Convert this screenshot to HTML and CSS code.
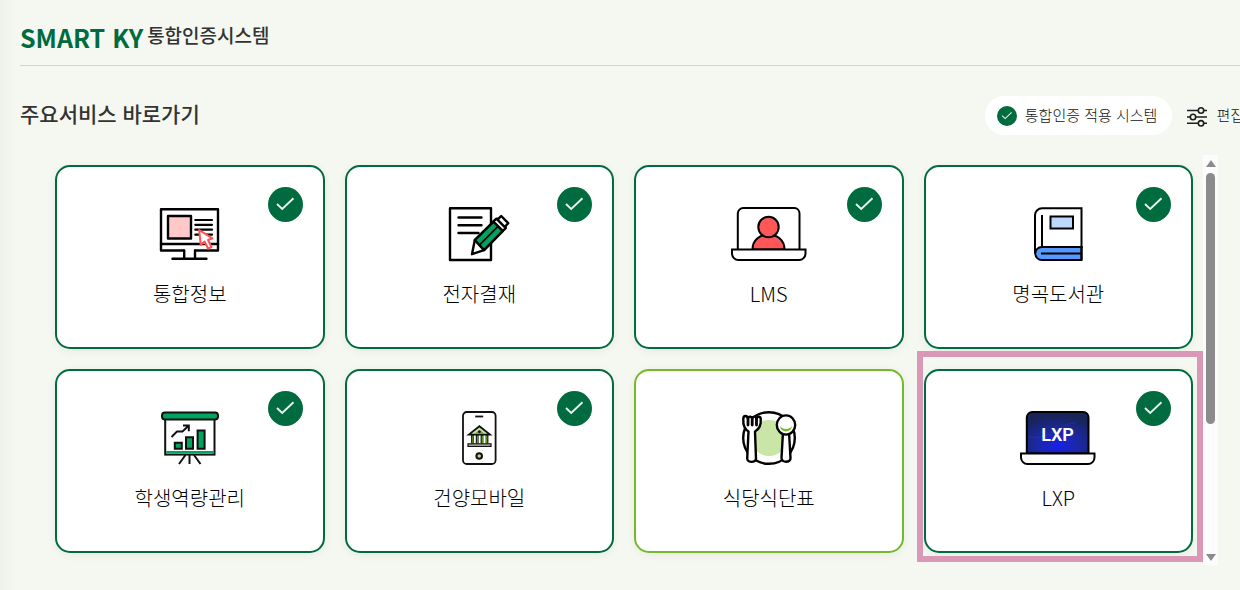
FILE: index.html
```html
<!DOCTYPE html>
<html lang="ko">
<head>
<meta charset="utf-8">
<meta name="viewport" content="width=device-width, initial-scale=1">
<title>SMART KY 통합인증시스템</title>
<link rel="stylesheet" href="styles.css">
</head>
<body>
<svg class="defs" aria-hidden="true">
  <symbol id="check" viewBox="0 0 35 35">
    <circle cx="17.5" cy="17.5" r="17.5" fill="#006b3f"/>
    <path d="M9 17l5.2 5L25.500 11.300" fill="none" stroke="#e9f3ee" stroke-width="1.900"/>
  </symbol>
</svg>
<header class="header">
  <h1 class="brand"><span class="brand-name">SMART KY</span><span class="brand-sub">통합인증시스템</span></h1>
</header>
<main class="main">
  <div class="section-head">
    <h2 class="section-title">주요서비스 바로가기</h2>
    <div class="tools">
      <p class="legend"><svg class="legend-icon" aria-hidden="true"><use href="#check"/></svg><span class="legend-text">통합인증 적용 시스템</span></p>
      <button class="edit" type="button">
        <svg class="edit-icon" viewBox="0 0 22 22" fill="none" stroke="#1d1d1d" stroke-width="1.6" aria-hidden="true"><path d="M1 5.500h11M18 5.500h3M1 12h3M10 12h11M1 18.300h11M18 18.300h3"/><circle cx="15" cy="5.500" r="2.700"/><circle cx="7" cy="12" r="2.700"/><circle cx="15" cy="18.300" r="2.700"/></svg><span class="legend-text">편집</span>
      </button>
    </div>
  </div>
  <div class="services">
    <ul class="grid">
      <li class="item"><a class="card" href="#">
        <svg class="icon" viewBox="0 0 80 56" fill="none" stroke="#000" stroke-width="2.4" stroke-linejoin="round" stroke-linecap="round" aria-hidden="true"><rect x="11" y="3.3" width="57" height="41.2"/><path d="M11 38h57"/><path d="M34.5 43h10V52h-10z" fill="#fff" stroke="none"/><path d="M34.2 44.5v8M45 44.5v8M22.5 52.7h34"/><rect x="18" y="10" width="23" height="22.5" fill="#ffc9c9"/><path d="M45.3 14H62M45.3 18.800H62M45.3 23.700H62M45.3 28.700H62" stroke-width="2.200"/><path d="M49.2 24l1.5 14.8 4-3.2 3.400 7.100 3.400-1.700-3.400-7 4.300-1.700z" fill="#fff" stroke="#ff5252" stroke-width="2"/></svg>
        <span class="label">통합정보</span>
        <svg class="badge" role="img" aria-label="통합인증"><use href="#check"/></svg></a></li>
      <li class="item"><a class="card" href="#">
        <svg class="icon" viewBox="0 0 80 56" fill="none" stroke="#000" stroke-width="2.400" stroke-linejoin="round" stroke-linecap="round" aria-hidden="true"><rect x="11" y="2.300" width="41" height="51.700"/><path d="M19.500 11.500h23M19.500 19.300h23M19.500 27h20"/><path d="M33 48.200l2.800-14.100 18.800-18.400 9.200 9.200-18.800 19.200z" fill="#fff"/><path d="M35.800 34.100l18.800-18.400 9.200 9.200-18.800 19.200z" fill="#00a35f"/><path d="M40.400 39.200l18.800-19" stroke-width="1.800"/><path d="M54.400 15.500l3-2.800 9.400 9.400-3 2.800zM57.400 12.700h2.200l2.600-2.700 7 7.200-2.600 2.800.2 2.100z" fill="#fff"/></svg>
        <span class="label">전자결재</span>
        <svg class="badge" role="img" aria-label="통합인증"><use href="#check"/></svg></a></li>
      <li class="item"><a class="card" href="#">
        <svg class="icon" viewBox="0 0 80 56" fill="#fff" stroke="#000" stroke-width="2" aria-hidden="true"><path d="M8.800 43.500V7.500a5.500 5.500 0 0 1 5.500-5.500h51A5.500 5.500 0 0 1 70.500 7.500v36"/><path d="M23.500 43.500c0-20 32-20 32 0z" fill="#ff5757"/><circle cx="39.500" cy="21" r="10.200" fill="#ff5757"/><path d="M3 43.500h73.500v4a6.500 6.500 0 0 1-6.500 6.500H9.500A6.500 6.500 0 0 1 3 47.500z"/></svg>
        <span class="label">LMS</span>
        <svg class="badge" role="img" aria-label="통합인증"><use href="#check"/></svg></a></li>
      <li class="item"><a class="card" href="#">
        <svg class="icon" viewBox="0 0 80 56" fill="none" stroke="#000" stroke-width="2" aria-hidden="true"><path d="M17 47.500V9a7 7 0 0 1 7-6.700h39.500v39H24" fill="#fff"/><path d="M63.500 54H23.800a6.400 6.400 0 0 1 0-13h39.700z" fill="#5599ff"/><path d="M63.500 40v14M24 9v31M23 47.500h40"/><rect x="32.500" y="10.500" width="22.500" height="12" fill="#bdd8ff"/></svg>
        <span class="label">명곡도서관</span>
        <svg class="badge" role="img" aria-label="통합인증"><use href="#check"/></svg></a></li>
      <li class="item"><a class="card" href="#">
        <svg class="icon" viewBox="0 0 80 56" fill="none" stroke="#111" stroke-width="2" aria-hidden="true"><path d="M35.500 45L29 54M39.500 45v9M44 45l6.500 9"/><rect x="15.200" y="8" width="49.300" height="36.600" fill="#fff"/><path d="M16.200 42.300h47.400" stroke="#00a35f" stroke-width="2.600"/><rect x="12" y="2.500" width="56" height="7" rx="3" fill="#00a35f"/><g fill="#00a35f"><path d="M24.800 32.800h7v6h-7zM36 27.300h7v11.500h-7zM47.600 20.600h7v18.200h-7z"/></g><path d="M21.500 27l5.500-5.500h5.500l5.500-5.200M33 15.600h5.800v5.600"/></svg>
        <span class="label">학생역량관리</span>
        <svg class="badge" role="img" aria-label="통합인증"><use href="#check"/></svg></a></li>
      <li class="item"><a class="card" href="#">
        <svg class="icon" viewBox="0 0 80 56" fill="none" stroke="#111" stroke-width="1.800" aria-hidden="true"><rect x="24" y="2" width="32.600" height="52" rx="3.800" fill="#fff"/><path d="M36.200 6.500h8"/><path d="M32 25h17v8.500H32z" fill="#fff" stroke="none"/><path d="M33.500 25v8.500M38.200 25v8.500M43 25v8.500M48 25v8.500" stroke-width="2.800"/><path d="M33.800 25.500v8M38.500 25.500v8M43.300 25.500v8M47.700 25.500v8" stroke="#5f982c" stroke-width="1.300"/><path d="M29.800 24.600l10.600-8.400L51 24.600z" fill="#c8dfb4"/><path d="M35.500 23.700l5-4 5 4z" fill="#69a83a" stroke="none"/><circle cx="40.400" cy="21.800" r="1.400" fill="#111" stroke="none"/><path d="M29 33.800h23v2.600H29z" fill="#ccc" stroke-width="1.200"/><circle cx="40.200" cy="46" r="2.800" fill="#b7d98e" stroke-width="2"/></svg>
        <span class="label">건양모바일</span>
        <svg class="badge" role="img" aria-label="통합인증"><use href="#check"/></svg></a></li>
      <li class="item"><a class="card card-plain" href="#">
        <svg class="icon" viewBox="0 0 80 56" fill="#fff" stroke="#000" stroke-width="2.400" stroke-linejoin="round" aria-hidden="true"><circle cx="40" cy="28" r="25.800"/><circle cx="40" cy="28" r="18" fill="#c9e6a7" stroke="none"/><path d="M16.500 6c-1.700 0-2.200 1-2.200 3-.3 5 0 9.500 5.200 12.500L18.200 48.500c0 4.500 9 4.500 8.800 0L26 21.500c5.200-3 6.200-7.500 5.700-12.500 0-3-3.500-3-4.200-.5-.3-2.500-3.800-2.500-4.300 0-.6-2.500-3.800-2.500-4.300 0-.3-1.300-1.200-2.500-2.400-2.500z"/><path d="M19 8v7M23.200 8v7M27.500 8v7" stroke-width="2.800" stroke-linecap="round"/><path d="M54 22l-1.500 26c0 5 9.500 5 9 0L60 22z"/><ellipse cx="57" cy="15" rx="9.200" ry="9.600"/><path d="M51 15.800c1.500 4.200 10.500 4.200 12 0-.5 7.500-11.500 7.500-12 0z" fill="#76b82a" stroke="none"/></svg>
        <span class="label">식당식단표</span></a></li>
      <li class="item item-marked"><a class="card" href="#">
        <svg class="icon" viewBox="0 0 80 56" fill="#fff" stroke="#000" stroke-width="2" aria-hidden="true"><defs><radialGradient id="glow" cx=".5" cy=".82" r=".75"><stop offset="0" stop-color="#1820e6"/><stop offset=".45" stop-color="#1b28a6"/><stop offset="1" stop-color="#192458"/></radialGradient></defs><path d="M8.800 43.500V7.500a5.500 5.500 0 0 1 5.500-5.500h51A5.500 5.500 0 0 1 70.500 7.500v36z" fill="url(#glow)"/><path d="M10 27q17 2 28-6t19-8" stroke="#3450b0" stroke-width=".5" fill="none" opacity=".6"/><text class="screen-text" x="39.500" y="31" text-anchor="middle">LXP</text><path d="M3 43.500h73.500v4a6.500 6.500 0 0 1-6.500 6.500H9.500A6.500 6.500 0 0 1 3 47.500z"/></svg>
        <span class="label">LXP</span>
        <svg class="badge" role="img" aria-label="통합인증"><use href="#check"/></svg></a></li>
    </ul>
    <div class="scrollbar" aria-hidden="true">
      <span class="arrow arrow-up"></span>
      <span class="thumb"></span>
      <span class="arrow arrow-down"></span>
    </div>
  </div>
</main>
</body>
</html>
```
FILE: styles.css
```css
* { box-sizing: border-box; }

body {
  margin: 0;
  min-height: 100vh;
  padding-left: 20px;
  overflow: hidden;
  background: linear-gradient(to right, #eff2ea, #f5f8f1 16px);
  color: #333;
  font-family: "Noto Sans CJK KR", "Noto Sans", sans-serif;
}

h1, h2, p, ul { margin: 0; padding: 0; }

.defs { display: none; }

.header {
  height: 66px;
  padding-top: 15px;
  border-bottom: 1px solid #d0d8c0;
}

.brand {
  display: flex;
  gap: 4px;
  line-height: 40px;
}

.brand-name {
  padding-top: 2px;
  color: #006b3f;
  font-size: 25px;
  font-weight: 700;
}

.brand-sub {
  font-size: 19px;
  font-weight: 500;
}

.section-head {
  display: flex;
  justify-content: space-between;
  align-items: flex-start;
  padding: 30px 0 20px;
}

.section-title {
  font-size: 21px;
  font-weight: 500;
  line-height: 34px;
}

.tools {
  display: flex;
  gap: 14px;
  margin-right: -4px;
  white-space: nowrap;
}

.legend {
  display: flex;
  align-items: center;
  gap: 8px;
  height: 39px;
  padding: 0 15px 0 12px;
  border-radius: 20px;
  background: #fff;
}

.legend-icon { width: 20px; height: 20px; }

.legend-text {
  padding-bottom: 2px;
  color: #111;
  font-size: 15px;
  font-weight: 300;
}

.edit {
  display: flex;
  align-items: center;
  gap: 8px;
  padding: 0;
  border: 0;
  background: none;
  font: inherit;
}

.edit-icon { width: 22px; height: 22px; }

.services {
  display: flex;
  margin-right: 22px;
}

.grid {
  display: grid;
  flex: 1;
  grid-template-columns: repeat(4, 1fr);
  gap: 20px;
  padding: 10px 10px 12px 35px;
  list-style: none;
}

.item { position: relative; }

.item-marked::after {
  content: "";
  position: absolute;
  inset: -18px -10px -9px -7px;
  border: 6px solid #d998b5;
  pointer-events: none;
}

.card {
  position: relative;
  display: flex;
  flex-direction: column;
  align-items: center;
  gap: 18px;
  padding: 39px 20px;
  border: 2px solid #006b3f;
  border-radius: 15px;
  background: #fff;
  box-shadow: 0 2px 10px rgba(0, 0, 0, 0.06);
  color: #000;
  text-decoration: none;
}

.card-plain { border-color: #76b82a; }

.icon { width: 80px; height: 56px; }

.label {
  font-size: 20px;
  font-weight: 300;
  line-height: 28px;
}

.screen-text {
  fill: #fff;
  stroke: none;
  font-family: Roboto, sans-serif;
  font-size: 18px;
  font-weight: 600;
}

.badge {
  position: absolute;
  top: 20px;
  right: 20px;
  width: 35px;
  height: 35px;
}

.scrollbar {
  display: flex;
  flex-direction: column;
  align-items: center;
  width: 15px;
  padding: 5px 0 4px;
  background: #fcfcfc;
}

.arrow {
  border: 5px solid transparent;
}

.arrow-up {
  border-top: 0;
  border-bottom: 7px solid #8b8b8b;
}

.arrow-down {
  margin-top: auto;
  border-bottom: 0;
  border-top: 7px solid #8b8b8b;
}

.thumb {
  width: 9px;
  height: 251px;
  margin-top: 6px;
  border-radius: 5px;
  background: #8b8b8b;
}
```
